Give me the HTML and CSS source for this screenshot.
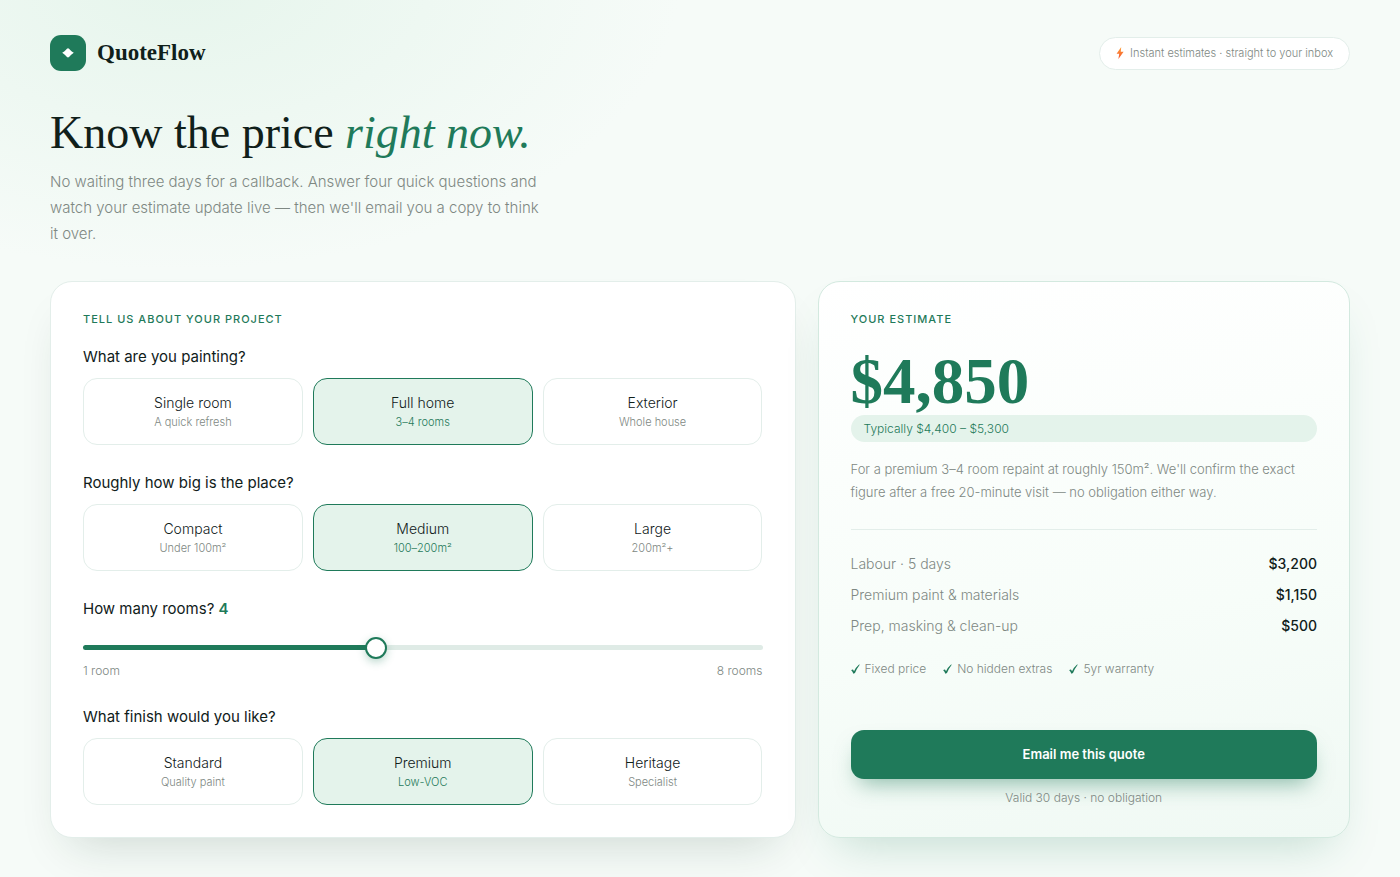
FILE: index.html
```html
<!DOCTYPE html>
<html lang="en">
<head>
<meta charset="utf-8">
<meta name="viewport" content="width=device-width, initial-scale=1">
<title>QuoteFlow</title>
<link rel="stylesheet" href="styles.css">
</head>
<body>
<div class="page">
  <header class="topbar">
    <div class="brand">
      <span class="brand-mark"><svg width="12" height="10" viewBox="0 0 12 10" aria-hidden="true"><path d="M6 0.3Q7 0.3 8.2 1.9Q9.6 3.6 11.8 4.7Q9.6 6 8.2 7.8Q7 9.5 6 9.5T3.8 7.8Q2.4 6 0.2 4.7Q2.4 3.6 3.8 1.9Q5 0.3 6 0.3Z" fill="#fff"/></svg></span>
      <span class="brand-name">QuoteFlow</span>
    </div>
    <div class="badge">
      <svg width="8" height="12" viewBox="0 0 8 12" aria-hidden="true"><defs><linearGradient id="bolt" x1="0" y1="0" x2="0" y2="1"><stop offset="0" stop-color="#ffa23a"/><stop offset="1" stop-color="#f4512c"/></linearGradient></defs><path d="M5.2 0L0.6 6.8H3.2L2.4 12L7.6 4.8H4.8Z" fill="url(#bolt)"/></svg>
      <span>Instant estimates · straight to your inbox</span>
    </div>
  </header>

  <section class="hero">
    <h1>Know the price <em>right now.</em></h1>
    <p>No waiting three days for a callback. Answer four quick questions and watch your estimate update live — then we'll email you a copy to think it over.</p>
  </section>

  <main class="columns">
    <form class="card project">
      <h2 class="eyebrow">Tell us about your project</h2>

      <div class="question" role="radiogroup" aria-labelledby="q-type">
        <div class="question-title" id="q-type">What are you painting?</div>
        <div class="options">
          <label class="option"><input type="radio" name="type"><span class="option-name">Single room</span><span class="option-hint">A quick refresh</span></label>
          <label class="option"><input type="radio" name="type" checked><span class="option-name">Full home</span><span class="option-hint">3–4 rooms</span></label>
          <label class="option"><input type="radio" name="type"><span class="option-name">Exterior</span><span class="option-hint">Whole house</span></label>
        </div>
      </div>

      <div class="question" role="radiogroup" aria-labelledby="q-size">
        <div class="question-title" id="q-size">Roughly how big is the place?</div>
        <div class="options">
          <label class="option"><input type="radio" name="size"><span class="option-name">Compact</span><span class="option-hint">Under 100m²</span></label>
          <label class="option"><input type="radio" name="size" checked><span class="option-name">Medium</span><span class="option-hint">100–200m²</span></label>
          <label class="option"><input type="radio" name="size"><span class="option-name">Large</span><span class="option-hint">200m²+</span></label>
        </div>
      </div>

      <div class="question">
        <label class="question-title" for="rooms">How many rooms? <output class="room-count" for="rooms">4</output></label>
        <input class="slider" id="rooms" type="range" min="1" max="8" value="4" style="--fill: 43%">
        <div class="slider-ends"><span>1 room</span><span>8 rooms</span></div>
      </div>

      <div class="question" role="radiogroup" aria-labelledby="q-finish">
        <div class="question-title" id="q-finish">What finish would you like?</div>
        <div class="options">
          <label class="option"><input type="radio" name="finish"><span class="option-name">Standard</span><span class="option-hint">Quality paint</span></label>
          <label class="option"><input type="radio" name="finish" checked><span class="option-name">Premium</span><span class="option-hint">Low-VOC</span></label>
          <label class="option"><input type="radio" name="finish"><span class="option-name">Heritage</span><span class="option-hint">Specialist</span></label>
        </div>
      </div>
    </form>

    <aside class="card estimate">
      <h2 class="eyebrow">Your estimate</h2>
      <div class="price">$4,850</div>
      <div class="range">Typically $4,400 – $5,300</div>
      <p class="summary">For a premium 3–4 room repaint at roughly 150m². We'll confirm the exact figure after a free 20-minute visit — no obligation either way.</p>
      <dl class="lines">
        <div class="line"><dt>Labour · 5 days</dt><dd>$3,200</dd></div>
        <div class="line"><dt>Premium paint &amp; materials</dt><dd>$1,150</dd></div>
        <div class="line"><dt>Prep, masking &amp; clean-up</dt><dd>$500</dd></div>
      </dl>
      <ul class="perks">
        <li><svg class="tick" viewBox="0 0 9 10" aria-hidden="true"><path d="M0.2 6.2Q1.4 5.2 2.2 5.8L3 7.2Q5 3.2 7.8 0.8L8.9 0.5Q5.8 4.5 4 9L2.4 9.8Q1.6 7.4 0.2 6.2Z"/></svg>Fixed price</li>
        <li><svg class="tick" viewBox="0 0 9 10" aria-hidden="true"><path d="M0.2 6.2Q1.4 5.2 2.2 5.8L3 7.2Q5 3.2 7.8 0.8L8.9 0.5Q5.8 4.5 4 9L2.4 9.8Q1.6 7.4 0.2 6.2Z"/></svg>No hidden extras</li>
        <li><svg class="tick" viewBox="0 0 9 10" aria-hidden="true"><path d="M0.2 6.2Q1.4 5.2 2.2 5.8L3 7.2Q5 3.2 7.8 0.8L8.9 0.5Q5.8 4.5 4 9L2.4 9.8Q1.6 7.4 0.2 6.2Z"/></svg>5yr warranty</li>
      </ul>
      <button class="cta" type="button">Email me this quote</button>
      <p class="note">Valid 30 days · no obligation</p>
    </aside>
  </main>
</div>
</body>
</html>
```
FILE: styles.css
```css
:root {
  --green: #1f7a5a;
  --mint: #e4f3eb;
  --ink: #10201a;
  --muted: #7e8883;
  --line: #e3eeea;
  --serif: "Liberation Serif", serif;
}

* { box-sizing: border-box; }

body {
  margin: 0;
  min-height: 100vh;
  background: radial-gradient(ellipse 500px 290px at 180px -20px, #e6f5ec, rgba(230, 245, 236, 0)) no-repeat #f6fbf8;
  color: var(--ink);
  font-family: Inter, sans-serif;
  font-weight: 300;
}

h1, h2, p, dl, dd, ul { margin: 0; padding: 0; }

.page { padding: 35px 50px 40px; }

.topbar {
  display: flex;
  align-items: center;
  justify-content: space-between;
}

.brand {
  display: flex;
  align-items: center;
  gap: 11px;
}

.brand-mark {
  display: grid;
  place-items: center;
  width: 36px;
  height: 36px;
  border-radius: 11px;
  background: var(--green);
}

.brand-name {
  font: 700 23px/36px var(--serif);
}

.badge {
  display: flex;
  align-items: center;
  gap: 6px;
  padding: 8px 16px;
  border: 1px solid var(--line);
  border-radius: 17px;
  background: #fff;
  color: var(--muted);
  font-size: 11px;
  line-height: 15px;
}

.hero {
  max-width: 500px;
  margin: 38px 0 34px;
}

.hero h1 {
  margin-bottom: 12px;
  font: 400 46px/48px var(--serif);
  white-space: nowrap;
}

.hero em { color: var(--green); }

.hero p {
  color: var(--muted);
  font-size: 15px;
  line-height: 26px;
}

.columns {
  display: grid;
  grid-template-columns: 1.4fr 1fr;
  gap: 22px;
}

.card {
  display: flex;
  flex-direction: column;
  padding: 31px 32px 32px;
  border: 1px solid var(--line);
  border-radius: 22px;
  background: #fff;
  box-shadow: 0 24px 48px -20px rgba(16, 50, 36, 0.18);
}

.estimate {
  border-color: #d3e9df;
  background: linear-gradient(170deg, #fff, #f7fdf9 60%, #f0f9f4);
  box-shadow: 0 24px 48px -20px rgba(31, 122, 90, 0.26);
}

.eyebrow {
  color: var(--green);
  font-size: 11px;
  font-weight: 500;
  line-height: 12px;
  letter-spacing: 1px;
  text-transform: uppercase;
}

.question { margin-top: 28px; }

.eyebrow + .question { margin-top: 22px; }

.question-title {
  display: block;
  margin-bottom: 11px;
  font-size: 15px;
  font-weight: 400;
  line-height: 20px;
}

.room-count {
  color: var(--green);
  font-weight: 600;
}

.options {
  display: grid;
  grid-template-columns: repeat(3, 1fr);
  gap: 10px;
}

.option {
  display: flex;
  flex-direction: column;
  align-items: center;
  padding: 14px 8px 13px;
  border: 1px solid var(--line);
  border-radius: 14px;
  cursor: pointer;
}

.option input {
  position: absolute;
  opacity: 0;
  pointer-events: none;
}

.option-name {
  font-size: 14px;
  line-height: 20px;
}

.option-hint {
  color: var(--muted);
  font-size: 11px;
  line-height: 18px;
}

.option:has(input:checked) {
  border-color: var(--green);
  background: var(--mint);
}

.option:has(input:checked) .option-hint { color: var(--green); }

.slider {
  display: block;
  appearance: none;
  width: 100%;
  height: 22px;
  margin: 17px 0 5px;
  background: none;
}

.slider::-webkit-slider-runnable-track {
  height: 5px;
  border-radius: 3px;
  background: linear-gradient(90deg, var(--green) var(--fill), #dfebe6 var(--fill));
}

.slider::-webkit-slider-thumb {
  appearance: none;
  width: 22px;
  height: 22px;
  margin-top: -8px;
  border: 2px solid var(--green);
  border-radius: 50%;
  background: #fff;
  box-shadow: 0 3px 8px rgba(31, 122, 90, 0.3);
}

.slider-ends {
  display: flex;
  justify-content: space-between;
  color: var(--muted);
  font-size: 12px;
  line-height: 16px;
}

.price {
  margin-top: 22px;
  color: var(--green);
  font: 700 65px/68px var(--serif);
}

.range {
  padding: 5px 13px;
  border-radius: 14px;
  background: var(--mint);
  color: var(--green);
  font-size: 12px;
  line-height: 17px;
}

.summary {
  margin-top: 16px;
  color: var(--muted);
  font-size: 13px;
  line-height: 23px;
}

.lines {
  display: grid;
  gap: 11px;
  margin-top: 25px;
  padding-top: 24px;
  border-top: 1px solid var(--line);
}

.line {
  display: flex;
  justify-content: space-between;
  font-size: 14px;
  line-height: 20px;
}

.line dt { color: var(--muted); }

.line dd { font-weight: 500; }

.perks {
  display: flex;
  flex-wrap: wrap;
  gap: 8px 17px;
  margin-top: 25px;
  color: var(--muted);
  font-size: 12px;
  line-height: 16px;
  list-style: none;
}

.perks li {
  display: flex;
  align-items: center;
  gap: 5px;
}

.tick {
  width: 9px;
  height: 10px;
  fill: var(--green);
}

.cta {
  margin-top: auto;
  padding: 16px;
  border: 0;
  border-radius: 13px;
  background: var(--green);
  box-shadow: 0 12px 22px -8px rgba(31, 122, 90, 0.5);
  color: #fff;
  font: 600 13px/17px Inter, sans-serif;
  cursor: pointer;
}

.note {
  margin-top: 12px;
  color: var(--muted);
  font-size: 12px;
  line-height: 14px;
  text-align: center;
}

@media (max-width: 860px) {
  .page { padding: 24px 20px; }
  .columns { grid-template-columns: 1fr; }
  .hero h1 { white-space: normal; }
  .cta { margin-top: 32px; }
}
```
